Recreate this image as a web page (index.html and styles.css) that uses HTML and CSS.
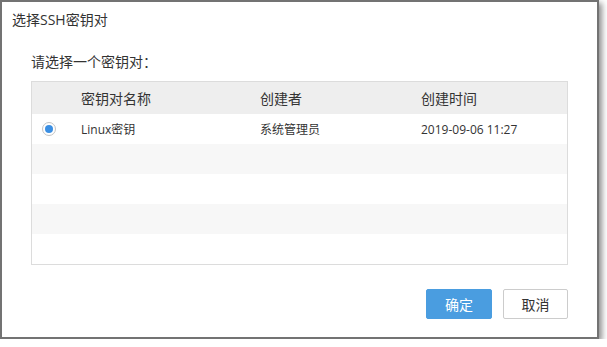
FILE: index.html
```html
<!DOCTYPE html>
<html lang="zh-CN">
<head>
    <meta charset="UTF-8">
    <title>选择SSH密钥对</title>
    <link rel="stylesheet" href="styles.css">
</head>
<body>
    <div class="dialog">
        <!-- 标题 -->
        <div class="dialog-title">选择SSH密钥对</div>

        <div class="dialog-body">
            <div class="hint">请选择一个密钥对：</div>

            <table class="key-table">
                <thead>
                    <tr>
                        <th class="col-radio"></th>
                        <th class="col-name">密钥对名称</th>
                        <th class="col-owner">创建者</th>
                        <th>创建时间</th>
                    </tr>
                </thead>
                <tbody>
                    <tr>
                        <td class="col-radio"><span class="radio checked"></span></td>
                        <td>Linux密钥</td>
                        <td>系统管理员</td>
                        <td>2019-09-06 11:27</td>
                    </tr>
                    <tr><td></td><td></td><td></td><td></td></tr>
                    <tr><td></td><td></td><td></td><td></td></tr>
                    <tr><td></td><td></td><td></td><td></td></tr>
                    <tr><td></td><td></td><td></td><td></td></tr>
                </tbody>
            </table>

            <div class="actions">
                <button class="btn btn-primary">确定</button>
                <button class="btn">取消</button>
            </div>
        </div>
    </div>
</body>
</html>
```

FILE: styles.css
```css
/* 基本样式 */
body {
    margin: 0;
    background-color: #fff;
    font-family: "Open Sans", "Noto Sans CJK SC", sans-serif;
    color: #333;
}

/* 对话框 */
.dialog {
    width: 595px;
    height: 335px;
    border: 2px solid #737373;
    background-color: #fff;
    box-shadow: 3px 3px 6px rgba(0, 0, 0, 0.45);
}

.dialog-title {
    padding: 8px 10px 0;
    font-size: 14px;
    line-height: 20px;
}

.dialog-body {
    padding: 22px 29px 18px;
}

.hint {
    font-size: 14px;
    line-height: 20px;
    margin-bottom: 9px;
}

/* 表格 */
.key-table {
    width: 100%;
    border-collapse: collapse;
    border: 1px solid #dcdcdc;
    table-layout: fixed;
}

.key-table th,
.key-table td {
    padding: 0;
    text-align: left;
    white-space: nowrap;
}

.key-table th {
    height: 32px;
    background-color: #eee;
    font-size: 14px;
    font-weight: normal;
}

.key-table td {
    height: 30px;
    font-size: 12px;
}

.key-table tbody tr:nth-child(even) td {
    background-color: #f7f7f7;
}

.col-radio {
    width: 49px;
}

.key-table td.col-radio {
    padding-left: 10px;
}

.col-name {
    width: 179px;
}

.col-owner {
    width: 161px;
}

/* 单选框 */
.radio {
    display: block;
    width: 12px;
    height: 12px;
    border: 1px solid #c4c4c4;
    border-radius: 50%;
    background-color: #fff;
    position: relative;
}

.radio.checked::after {
    content: "";
    position: absolute;
    left: 2px;
    top: 2px;
    width: 8px;
    height: 8px;
    border-radius: 50%;
    background-color: #3b8fe3;
}

/* 按钮 */
.actions {
    display: flex;
    justify-content: flex-end;
    gap: 11px;
    margin-top: 24px;
}

.btn {
    width: 65px;
    height: 30px;
    border: 1px solid #ccc;
    border-radius: 2px;
    background-color: #fff;
    color: #333;
    font-family: inherit;
    font-size: 14px;
    padding: 0;
    cursor: pointer;
}

.btn-primary {
    width: 66px;
    border-color: #4a9de0;
    background-color: #4a9de0;
    color: #fff;
}
```
